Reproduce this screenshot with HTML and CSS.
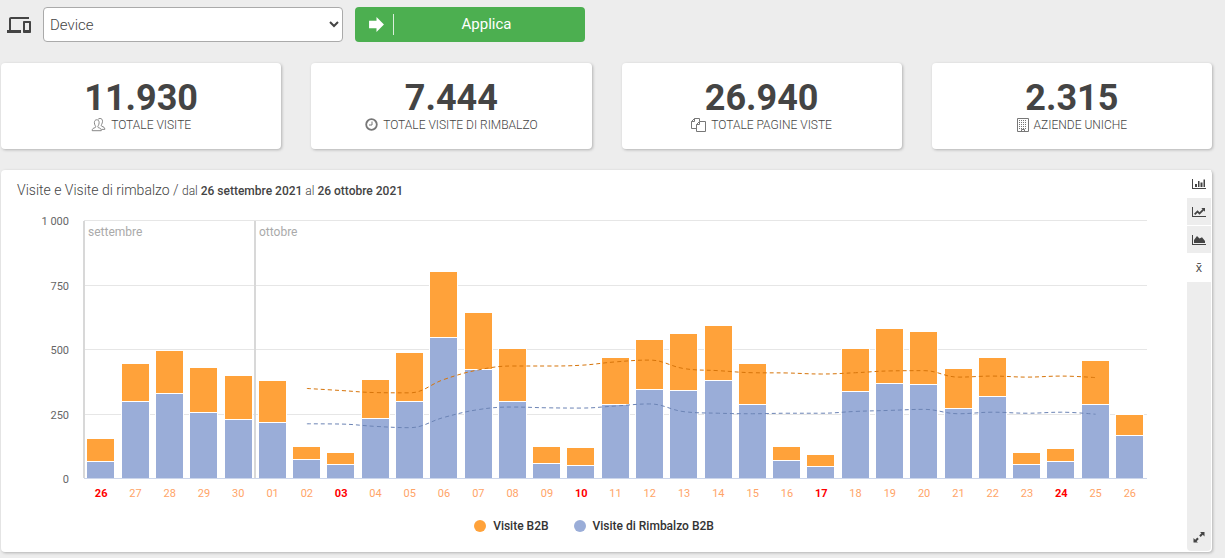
FILE: index.html
```html
<!DOCTYPE html>
<html lang="it">
<head>
<meta charset="utf-8">
<title>Visite</title>
<link rel="stylesheet" href="styles.css">
</head>
<body>
<form class="filters">
  <svg class="device-icon" viewBox="0 0 24 24" aria-hidden="true"><path d="M4 6h18V4H4c-1.100 0-2 .9-2 2v11H0v3h14v-3H4V6zm19 2h-6c-.55 0-1 .45-1 1v10c0 .55.45 1 1 1h6c.55 0 1-.45 1-1V9c0-.55-.45-1-1-1zm-1 9h-4v-7h4v7z"/></svg>
  <select class="device-select" aria-label="Device"><option>Device</option></select>
  <button class="apply" type="button">
    <span class="apply-icon"><svg viewBox="0 0 16 16" aria-hidden="true"><path d="M1 4.500h7V1l7 7-7 7v-3.500H1z"/></svg></span>
    <span class="apply-text">Applica</span>
  </button>
</form>

<section class="cards">
  <article class="card">
    <strong class="card-value">11.930</strong>
    <span class="card-label"><svg class="icon-users" viewBox="0 0 16 16" aria-hidden="true"><path d="M.8 14.500c0-2.600 1.200-2.700 3.300-3.500 1-.4.8-1.200.2-2.200-.7-1.200-1-2.200-1-3.500 0-2 1-3.300 2.700-3.300s2.700 1.300 2.700 3.300c0 1.300-.3 2.300-1 3.500-.6 1-.8 1.800.2 2.200 2.100.8 3.300.9 3.300 3.500zM7.500 1.600C8 .9 8.800.5 9.800.5c1.800 0 2.800 1.300 2.800 3.300 0 1.300-.4 2.300-1 3.500-.6 1-.7 1.800.2 2.200 2.100.8 3.400 1 3.400 3.500h-3.700"/></svg>TOTALE VISITE</span>
  </article>
  <article class="card">
    <strong class="card-value">7.444</strong>
    <span class="card-label"><svg class="icon-clock" viewBox="0 0 13 14" aria-hidden="true"><circle cx="6.500" cy="6.500" r="5.300" stroke-width="1.800"/><path d="M7 3.500v3.500H4"/></svg>TOTALE VISITE DI RIMBALZO</span>
  </article>
  <article class="card">
    <strong class="card-value">26.940</strong>
    <span class="card-label"><svg class="icon-wide" viewBox="0 0 15 14" aria-hidden="true"><path d="M5.500 10.500h-5v-7l3-3h5v2.500M3.500.5v3h-3M8.500 3.500h6v10h-9v-7zM8.500 3.500v3h-3"/></svg>TOTALE PAGINE VISTE</span>
  </article>
  <article class="card">
    <strong class="card-value">2.315</strong>
    <span class="card-label"><svg class="icon-building" viewBox="0 0 12 14" aria-hidden="true"><path d="M.5.5h11v13H.5zM4.500 13.500v-2h3v2"/><path stroke-dasharray="1 1" d="M2 2.500h8M2 4.500h8M2 6.500h8M2 8.500h8M2 10.500h8"/></svg>AZIENDE UNICHE</span>
  </article>
</section>

<section class="panel">
  <div class="panel-main">
    <h1 class="panel-title">Visite e Visite di rimbalzo / <small>dal <b>26 settembre 2021</b> al <b>26 ottobre 2021</b></small></h1>
    <div class="chart" id="chart"></div>
    <ul class="legend">
      <li><i class="dot dot-visits"></i>Visite B2B</li>
      <li><i class="dot dot-bounces"></i>Visite di Rimbalzo B2B</li>
    </ul>
  </div>
  <div class="tools">
    <button class="tool tool-on" type="button" aria-label="Barre"><svg viewBox="0 0 14 12" aria-hidden="true"><path d="M0 1h1v9h13v1H0zM3 6h2v3H3zM6 3h1.500v6H6zM8.500 4.500h2V9h-2zM11.500 1.500h1.500V9h-1.500z"/></svg></button>
    <button class="tool" type="button" aria-label="Linee"><svg viewBox="0 0 14 12" aria-hidden="true"><path d="M0 1h1v9h13v1H0zM2 7.800L5.500 4.300l2 2 3-3L9.300 2H13v3.700l-1.200-1.200-4.300 4.300-2-2L3.300 9z"/></svg></button>
    <button class="tool" type="button" aria-label="Aree"><svg viewBox="0 0 14 12" aria-hidden="true"><path d="M0 1h1v9h13v1H0zM2 9V6l3-4 2.500 2.500L10 3.200 13 7v2z"/></svg></button>
    <button class="tool tool-on" type="button" aria-label="Media">x̄</button>
    <button class="tool tool-expand" type="button" aria-label="Espandi"><svg viewBox="0 0 12 12" aria-hidden="true"><path d="M7 1h4.500v4.500L9.800 3.800 7.700 5.900 6.200 4.400l2.200-2.200zM5 11.500H.5V7l1.700 1.700 2.100-2.100 1.500 1.500-2.200 2.200z"/></svg></button>
  </div>
</section>
<script src="chart.js"></script>
</body>
</html>
```
FILE: styles.css
```css
* { box-sizing: border-box; }

body {
  margin: 0;
  padding: 7px 13px 6px 1px;
  background: #ededed;
  color: #444;
  font-family: Roboto, "Open Sans", sans-serif;
  font-weight: 300;
}

.filters {
  display: flex;
  align-items: center;
  padding-left: 6px;
}

.device-icon { width: 24px; height: 24px; fill: #444; }

.device-select {
  width: 300px;
  height: 35px;
  margin: 0 12px;
  padding: 0 2px;
  border: 1px solid #aaa;
  border-radius: 4px;
  background: #fff;
  color: #444;
  font: inherit;
  font-size: 15px;
}

.apply {
  display: flex;
  align-items: center;
  width: 230px;
  height: 35px;
  padding: 0;
  border: 0;
  border-radius: 4px;
  background: #4caf50;
  color: #fff;
  font: inherit;
  font-size: 15px;
  font-weight: 400;
}

.apply-icon {
  display: flex;
  width: 39px;
  height: 21px;
  padding-left: 13px;
  align-items: center;
  border-right: 1px solid #dbefdc;
}

.apply-icon svg { width: 17px; height: 17px; fill: #fff; }
.apply-text { flex: 1; padding: 0 6px 2px 0; }

.cards {
  display: grid;
  grid-template-columns: repeat(4, 1fr);
  gap: 30px;
  margin: 21px 0;
}

.card {
  display: flex;
  flex-direction: column;
  align-items: center;
  padding: 16px 8px;
  border-radius: 4px;
  background: #fff;
  box-shadow: 1px 1px 3px rgba(0, 0, 0, 0.25);
}

.card-value { font-size: 36px; line-height: 39px; font-weight: 700; }

.card-label {
  display: flex;
  align-items: center;
  gap: 5px;
  font-size: 12px;
  line-height: 15px;
}

.card-label svg { height: 14px; margin-bottom: 1px; fill: none; stroke: #777; }
.icon-users { width: 15px; }
.icon-clock { width: 13px; }
.icon-wide { width: 15px; }
.icon-building { width: 12px; }

.panel {
  display: flex;
  padding: 0 1px 1px 0;
  border-radius: 4px;
  background: #fff;
  box-shadow: 1px 1px 3px rgba(0, 0, 0, 0.25);
}

.panel-main { flex: 1; min-width: 0; padding-bottom: 15px; }

.panel-title {
  margin: 0;
  padding: 10px 16px 9px;
  font-size: 14px;
  line-height: 20px;
  font-weight: 300;
}

.panel-title small { font-size: 12px; }
.panel-title b { font-weight: 500; }

.chart { height: 306px; overflow: hidden; }
.chart svg { display: block; }
.chart text { font-size: 11px; font-weight: 400; fill: #666; }
.chart .month { font-size: 12px; fill: #aaa; }
.chart .day { fill: #ffa467; }
.chart .sunday { fill: #f00; font-weight: 700; }
.grid { fill: #e6e6e6; }
.axis { fill: #ccd6eb; }
.separator { fill: #d8d8d8; }
.bar-back { fill: #fff; }
.bar-visits { fill: #ffa23a; }
.bar-bounces { fill: #9aadd8; }
.trend { fill: none; stroke-width: 1; stroke-dasharray: 4 3; }
.trend-visits { stroke: #d6740a; }
.trend-bounces { stroke: #6c84b5; }

.legend {
  display: flex;
  justify-content: center;
  gap: 25px;
  margin: 0;
  padding: 0;
  list-style: none;
  color: #333;
  font-size: 12px;
  line-height: 20px;
  font-weight: 500;
}

.legend li { display: flex; align-items: center; gap: 7px; }
.dot { width: 12px; height: 12px; border-radius: 50%; }
.dot-visits { background: #ffa23a; }
.dot-bounces { background: #9aadd8; }

.tools {
  display: flex;
  flex-direction: column;
  width: 24px;
}

.tool {
  display: flex;
  align-items: center;
  justify-content: center;
  height: 28px;
  padding: 0;
  border: 0;
  border-bottom: 1px solid #fff;
  background: #ededed;
  color: #444;
  font: inherit;
  font-size: 12px;
  font-weight: 400;
}

.tool-on { background: #fff; }
.tool svg { width: 14px; height: 12px; fill: #444; }

.tool-expand {
  flex: 1;
  align-items: flex-end;
  padding-bottom: 8px;
  border-bottom: 0;
  border-radius: 0 0 4px 4px;
}

.tool-expand svg { width: 12px; }
```
FILE: chart.js
```js
const days = ["26","27","28","29","30","01","02","03","04","05","06","07","08","09","10","11","12","13","14","15","16","17","18","19","20","21","22","23","24","25","26"];
const sundays = [0, 7, 14, 21, 28];
const totals = [151,442,492,426,395,376,120,97,380,484,798,640,500,120,116,465,535,558,589,442,120,89,500,578,566,422,465,97,112,453,244];
const bounces = [62,295,326,252,225,213,70,50,229,295,543,419,295,54,47,283,341,337,376,283,66,43,333,364,360,267,314,50,62,283,163];
const trendStart = 6;
const trendTotals = [349,341,333,332,384,421,436,436,439,452,459,426,418,410,409,405,410,417,418,393,397,393,397,391];
const trendBounces = [212,211,202,197,237,267,277,274,273,281,289,259,253,251,253,253,260,264,268,251,257,253,257,249];

const host = document.getElementById("chart");
const plot = { left: 83, right: 40, top: 10, height: 258 };

function rect(cls, x, y, w, h) {
  return `<rect class="${cls}" x="${x}" y="${y}" width="${w}" height="${h}"/>`;
}

function text(cls, x, y, anchor, content) {
  return `<text class="${cls}" x="${x}" y="${y}" text-anchor="${anchor}">${content}</text>`;
}

function spline(points) {
  let d = `M${points[0]}`;
  let control = points[0];
  for (let i = 1; i < points.length; i++) {
    const [x, y] = points[i];
    let left = points[i];
    let right = points[i];
    if (i < points.length - 1) {
      const [px, py] = points[i - 1];
      const [nx, ny] = points[i + 1];
      const lx = (1.5 * x + px) / 2.5;
      const rx = (1.5 * x + nx) / 2.5;
      let ly = (1.5 * y + py) / 2.5;
      let ry = (1.5 * y + ny) / 2.5;
      const shift = (ry - ly) * (rx - x) / (rx - lx) + y - ry;
      ly += shift;
      ry += shift;
      const clamp = (v, a, b) => Math.max(Math.min(a, b), Math.min(Math.max(a, b), v));
      if (clamp(ly, py, y) !== ly) { ly = clamp(ly, py, y); ry = 2 * y - ly; }
      if (clamp(ry, ny, y) !== ry) { ry = clamp(ry, ny, y); ly = 2 * y - ry; }
      left = [lx, ly];
      right = [rx, ry];
    }
    d += `C${control} ${left} ${x},${y}`;
    control = right;
  }
  return d;
}

function draw() {
  const width = host.clientWidth;
  const inner = width - plot.left - plot.right;
  const step = inner / days.length;
  const base = plot.top + plot.height;
  const barWidth = Math.round(step * 0.8);
  const size = v => Math.round(v * plot.height / 1000);
  const center = i => plot.left + step * (i + 0.5);
  let out = "";

  for (const v of [1000, 750, 500, 250, 0]) {
    const y = base - Math.floor(v * plot.height / 1000);
    if (v) out += rect("grid", plot.left, y, inner, 1);
    out += text("", plot.left - 15, y + 5, "end", v === 1000 ? "1 000" : v);
  }
  [["settembre", 0], ["ottobre", 5]].forEach(([name, i]) => {
    const x = Math.round(plot.left + step * i);
    out += rect("separator", x - 1, plot.top + 1, 2, plot.height - 1);
    out += text("month", x + 4, plot.top + 16, "start", name);
  });
  days.forEach((day, i) => {
    const x = Math.round(center(i) - barWidth / 2 - 0.3);
    const total = size(totals[i]);
    const bounce = size(bounces[i]);
    out += rect("bar-back", x - 1, base - total - 1, barWidth + 2, total + 1);
    out += rect("bar-visits", x, base - total, barWidth, total - bounce - 1);
    out += rect("bar-bounces", x, base - bounce, barWidth, bounce);
    out += text(sundays.includes(i) ? "sunday" : "day", center(i), base + 19, "middle", day);
  });
  out += rect("axis", plot.left, base, inner, 1);
  [["trend-visits", trendTotals], ["trend-bounces", trendBounces]].forEach(([cls, values]) => {
    const points = values.map((v, i) => [center(i + trendStart), base + 0.5 - v * plot.height / 1000]);
    out += `<path class="trend ${cls}" d="${spline(points)}"/>`;
  });
  host.innerHTML = `<svg width="${width}" height="306" role="img" aria-label="Visite e Visite di rimbalzo">${out}</svg>`;
}

draw();
window.addEventListener("resize", draw);
```
